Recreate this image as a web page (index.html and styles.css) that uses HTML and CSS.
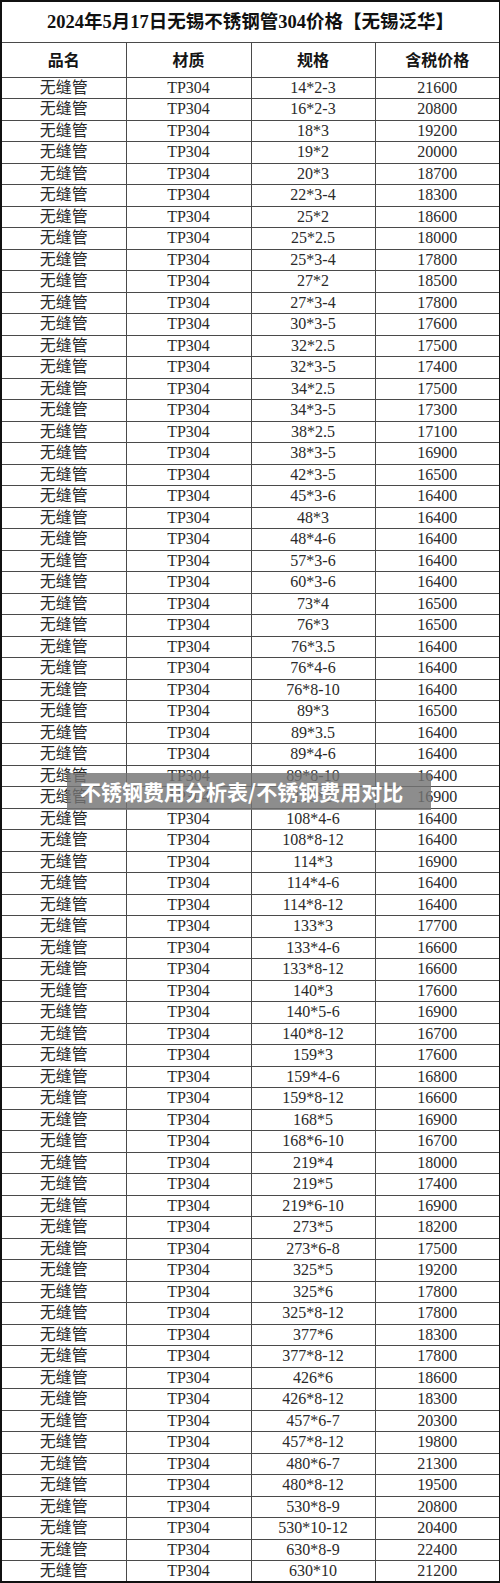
FILE: index.html
```html
<!DOCTYPE html>
<html lang="zh-CN">
<head>
<meta charset="utf-8">
<title>2024年5月17日无锡不锈钢管304价格</title>
<link rel="stylesheet" href="styles.css">
</head>
<body>
<div class="sheet">
<table class="price">
<colgroup><col class="c1"><col class="c2"><col class="c3"><col class="c4"></colgroup>
<thead>
<tr class="title-row"><th colspan="4" class="title">2024年5月17日无锡不锈钢管304价格【无锡泛华】</th></tr>
<tr class="head-row"><th>品名</th><th>材质</th><th>规格</th><th>含税价格</th></tr>
</thead>
<tbody>
<tr><td>无缝管</td><td>TP304</td><td>14*2-3</td><td>21600</td></tr>
<tr><td>无缝管</td><td>TP304</td><td>16*2-3</td><td>20800</td></tr>
<tr><td>无缝管</td><td>TP304</td><td>18*3</td><td>19200</td></tr>
<tr><td>无缝管</td><td>TP304</td><td>19*2</td><td>20000</td></tr>
<tr><td>无缝管</td><td>TP304</td><td>20*3</td><td>18700</td></tr>
<tr><td>无缝管</td><td>TP304</td><td>22*3-4</td><td>18300</td></tr>
<tr><td>无缝管</td><td>TP304</td><td>25*2</td><td>18600</td></tr>
<tr><td>无缝管</td><td>TP304</td><td>25*2.5</td><td>18000</td></tr>
<tr><td>无缝管</td><td>TP304</td><td>25*3-4</td><td>17800</td></tr>
<tr><td>无缝管</td><td>TP304</td><td>27*2</td><td>18500</td></tr>
<tr><td>无缝管</td><td>TP304</td><td>27*3-4</td><td>17800</td></tr>
<tr><td>无缝管</td><td>TP304</td><td>30*3-5</td><td>17600</td></tr>
<tr><td>无缝管</td><td>TP304</td><td>32*2.5</td><td>17500</td></tr>
<tr><td>无缝管</td><td>TP304</td><td>32*3-5</td><td>17400</td></tr>
<tr><td>无缝管</td><td>TP304</td><td>34*2.5</td><td>17500</td></tr>
<tr><td>无缝管</td><td>TP304</td><td>34*3-5</td><td>17300</td></tr>
<tr><td>无缝管</td><td>TP304</td><td>38*2.5</td><td>17100</td></tr>
<tr><td>无缝管</td><td>TP304</td><td>38*3-5</td><td>16900</td></tr>
<tr><td>无缝管</td><td>TP304</td><td>42*3-5</td><td>16500</td></tr>
<tr><td>无缝管</td><td>TP304</td><td>45*3-6</td><td>16400</td></tr>
<tr><td>无缝管</td><td>TP304</td><td>48*3</td><td>16400</td></tr>
<tr><td>无缝管</td><td>TP304</td><td>48*4-6</td><td>16400</td></tr>
<tr><td>无缝管</td><td>TP304</td><td>57*3-6</td><td>16400</td></tr>
<tr><td>无缝管</td><td>TP304</td><td>60*3-6</td><td>16400</td></tr>
<tr><td>无缝管</td><td>TP304</td><td>73*4</td><td>16500</td></tr>
<tr><td>无缝管</td><td>TP304</td><td>76*3</td><td>16500</td></tr>
<tr><td>无缝管</td><td>TP304</td><td>76*3.5</td><td>16400</td></tr>
<tr><td>无缝管</td><td>TP304</td><td>76*4-6</td><td>16400</td></tr>
<tr><td>无缝管</td><td>TP304</td><td>76*8-10</td><td>16400</td></tr>
<tr><td>无缝管</td><td>TP304</td><td>89*3</td><td>16500</td></tr>
<tr><td>无缝管</td><td>TP304</td><td>89*3.5</td><td>16400</td></tr>
<tr><td>无缝管</td><td>TP304</td><td>89*4-6</td><td>16400</td></tr>
<tr><td>无缝管</td><td>TP304</td><td>89*8-10</td><td>16400</td></tr>
<tr><td>无缝管</td><td>TP304</td><td>108*3</td><td>16900</td></tr>
<tr><td>无缝管</td><td>TP304</td><td>108*4-6</td><td>16400</td></tr>
<tr><td>无缝管</td><td>TP304</td><td>108*8-12</td><td>16400</td></tr>
<tr><td>无缝管</td><td>TP304</td><td>114*3</td><td>16900</td></tr>
<tr><td>无缝管</td><td>TP304</td><td>114*4-6</td><td>16400</td></tr>
<tr><td>无缝管</td><td>TP304</td><td>114*8-12</td><td>16400</td></tr>
<tr><td>无缝管</td><td>TP304</td><td>133*3</td><td>17700</td></tr>
<tr><td>无缝管</td><td>TP304</td><td>133*4-6</td><td>16600</td></tr>
<tr><td>无缝管</td><td>TP304</td><td>133*8-12</td><td>16600</td></tr>
<tr><td>无缝管</td><td>TP304</td><td>140*3</td><td>17600</td></tr>
<tr><td>无缝管</td><td>TP304</td><td>140*5-6</td><td>16900</td></tr>
<tr><td>无缝管</td><td>TP304</td><td>140*8-12</td><td>16700</td></tr>
<tr><td>无缝管</td><td>TP304</td><td>159*3</td><td>17600</td></tr>
<tr><td>无缝管</td><td>TP304</td><td>159*4-6</td><td>16800</td></tr>
<tr><td>无缝管</td><td>TP304</td><td>159*8-12</td><td>16600</td></tr>
<tr><td>无缝管</td><td>TP304</td><td>168*5</td><td>16900</td></tr>
<tr><td>无缝管</td><td>TP304</td><td>168*6-10</td><td>16700</td></tr>
<tr><td>无缝管</td><td>TP304</td><td>219*4</td><td>18000</td></tr>
<tr><td>无缝管</td><td>TP304</td><td>219*5</td><td>17400</td></tr>
<tr><td>无缝管</td><td>TP304</td><td>219*6-10</td><td>16900</td></tr>
<tr><td>无缝管</td><td>TP304</td><td>273*5</td><td>18200</td></tr>
<tr><td>无缝管</td><td>TP304</td><td>273*6-8</td><td>17500</td></tr>
<tr><td>无缝管</td><td>TP304</td><td>325*5</td><td>19200</td></tr>
<tr><td>无缝管</td><td>TP304</td><td>325*6</td><td>17800</td></tr>
<tr><td>无缝管</td><td>TP304</td><td>325*8-12</td><td>17800</td></tr>
<tr><td>无缝管</td><td>TP304</td><td>377*6</td><td>18300</td></tr>
<tr><td>无缝管</td><td>TP304</td><td>377*8-12</td><td>17800</td></tr>
<tr><td>无缝管</td><td>TP304</td><td>426*6</td><td>18600</td></tr>
<tr><td>无缝管</td><td>TP304</td><td>426*8-12</td><td>18300</td></tr>
<tr><td>无缝管</td><td>TP304</td><td>457*6-7</td><td>20300</td></tr>
<tr><td>无缝管</td><td>TP304</td><td>457*8-12</td><td>19800</td></tr>
<tr><td>无缝管</td><td>TP304</td><td>480*6-7</td><td>21300</td></tr>
<tr><td>无缝管</td><td>TP304</td><td>480*8-12</td><td>19500</td></tr>
<tr><td>无缝管</td><td>TP304</td><td>530*8-9</td><td>20800</td></tr>
<tr><td>无缝管</td><td>TP304</td><td>530*10-12</td><td>20400</td></tr>
<tr><td>无缝管</td><td>TP304</td><td>630*8-9</td><td>22400</td></tr>
<tr><td>无缝管</td><td>TP304</td><td>630*10</td><td>21200</td></tr>
</tbody>
</table>
<div class="banner">不锈钢费用分析表/不锈钢费用对比</div>
</div>
</body>
</html>
```

FILE: styles.css
```css
html, body {
  margin: 0;
  padding: 0;
  background: #ffffff;
}

.sheet {
  position: relative;
  width: 500px;
}

.price {
  width: 499px;
  table-layout: fixed;
  border-collapse: collapse;
  border: 2px solid #111111;
  font-family: "Liberation Serif", "Noto Sans CJK SC", serif;
  color: #2a2a2a;
}

.c1 { width: 125px; }
.c2 { width: 125px; }
.c3 { width: 124px; }
.c4 { width: 125px; }

.price th,
.price td {
  border: 1px solid #4a4a4a;
  padding: 0;
  text-align: center;
  vertical-align: middle;
  line-height: 1;
  white-space: nowrap;
  overflow: hidden;
}

.title-row { height: 41px; }

.title {
  font-size: 18.5px;
  font-weight: 700;
  color: #111111;
  padding: 3px 14px 0 0;
}

.head-row { height: 35px; }

.head-row th {
  font-size: 16px;
  font-weight: 700;
  color: #151515;
  padding-top: 2px;
}

.price tbody tr { height: 21.5px; }

.price td {
  font-size: 16px;
  font-weight: 400;
}

.banner {
  position: absolute;
  left: 67px;
  top: 773px;
  width: 351px;
  height: 37px;
  padding-left: 13px;
  background: rgba(116, 116, 116, 0.82);
  color: #ffffff;
  font-family: "Noto Sans CJK SC", sans-serif;
  font-weight: 700;
  font-size: 21px;
  line-height: 37px;
  white-space: nowrap;
}
```
